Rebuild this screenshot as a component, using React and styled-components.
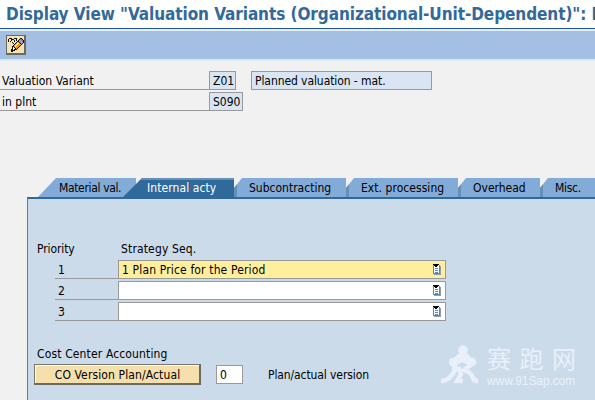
// App.jsx
import React from 'react';
import styled, { createGlobalStyle } from 'styled-components';

const GlobalStyle = createGlobalStyle`
  * {
    box-sizing: border-box;
  }

  body {
    margin: 0;
    background-color: #f1f1f1;
    overflow: hidden;
  }
`;

const Screen = styled.div`
  position: relative;
  display: flex;
  flex-direction: column;
  height: 400px;
  overflow: hidden;
  font-family: 'DejaVu Sans Condensed', 'DejaVu Sans', sans-serif;
  font-stretch: condensed;
  font-size: 12px;
  color: #000;
  white-space: nowrap;
`;

const Text = styled.span`
  line-height: 18px;
  letter-spacing: ${(props) => props.$spacing || 0}px;
`;

const TitleBar = styled.h1`
  flex: none;
  height: 29px;
  margin: 0;
  padding-left: 6px;
  background-color: #fff;
  border-bottom: 1px solid #22578c;
  color: #32699b;
  font-size: 17px;
  font-weight: bold;
  line-height: 28px;
  letter-spacing: -0.07px;
`;

const Toolbar = styled.div`
  flex: none;
  display: flex;
  height: 32px;
  padding: 4px 6px;
  background-color: #a3c0e4;
  border-top: 2px solid #e4edf7;
  border-bottom: 2px solid #dce7ee;
`;

const IconButton = styled.button`
  width: 20px;
  height: 20px;
  padding: 0;
  border: 1px solid #6b6a62;
  border-width: 1px 2px 2px 1px;
  background-color: #f5e3b3;

  svg {
    display: block;
  }
`;

const Header = styled.div`
  flex: none;
  display: flex;
  flex-direction: column;
  gap: 2px;
  height: 117px;
  padding-top: 10px;
`;

const Row = styled.div`
  display: flex;
  height: 19px;
`;

const Label = styled.div`
  display: flex;
  width: ${(props) => props.$width}px;
  padding-top: 1px;
  padding-left: ${(props) => props.$indent || 2}px;
  border-bottom: 1px solid #999;
`;

const Field = styled.div`
  display: flex;
  justify-content: space-between;
  align-items: center;
  width: ${(props) => props.$width}px;
  height: 19px;
  margin-left: ${(props) => props.$gap || 0}px;
  padding: 0 3px;
  border: 1px solid #999;
  background-color: ${(props) => props.$color || '#fff'};
`;

const TabStrip = styled.div`
  flex: none;
  display: flex;
  height: 19px;
  padding-left: 38px;
`;

const Tab = styled.div`
  flex: none;
  display: flex;
  width: ${(props) => props.$width}px;
  padding-top: 1px;
  padding-left: ${(props) => props.$indent}px;
  background-color: #83abd8;
  background-image: linear-gradient(90deg, #6490b8 3px, transparent 3px);
  clip-path: polygon(8px 0, 100% 0, 100% 100%, 0 100%, 0 10px);
`;

const FirstTab = styled(Tab)`
  background-image: none;
  clip-path: polygon(18px 0, 100% 0, 100% 100%, 0 100%);
`;

const ActiveTab = styled(Tab)`
  margin-left: -13px;
  background-color: #306a9b;
  background-image: linear-gradient(#6490b8 2px, transparent 2px);
  color: #fff;
  clip-path: polygon(19px 0, 100% 0, 100% 100%, 0 100%);
`;

const Panel = styled.div`
  flex: 1;
  margin-left: 27px;
  padding: 41px 0 0 6px;
  border-left: 1px solid #5580a8;
  border-top: 2px solid #306a9b;
  background-color: #ccdbea;
`;

const ColumnHeads = styled.div`
  display: grid;
  grid-template-columns: 84px 1fr;
  padding: 0 0 2px 3px;
  height: 20px;
`;

const StrategyList = styled.div`
  display: flex;
  flex-direction: column;
  gap: 2px;
  padding-left: 21px;
`;

const SectionTitle = styled.div`
  height: 19px;
  margin-top: 24px;
  padding-left: 3px;
`;

const Actions = styled.div`
  display: flex;
  align-items: center;
  height: 21px;
`;

const VersionButton = styled.button`
  display: flex;
  justify-content: center;
  align-items: center;
  width: 167px;
  height: 21px;
  padding: 1px 0 0 1px;
  border: 1px solid;
  border-width: 1px 2px 2px 1px;
  border-color: #77766f #6b6a62 #6b6a62 #77766f;
  box-shadow: inset 1px 1px 0 #fffbe8;
  background-color: #f5dfac;
  color: #000;
  font: inherit;
`;

const Caption = styled.div`
  margin-left: 25px;
`;

// Brand mark floats over the bottom right corner of the panel
const Watermark = styled.div`
  position: absolute;
  left: 440px;
  top: 344px;
  display: flex;
  gap: 8px;
  color: #e9f0fa;
`;

const Brand = styled.div`
  display: flex;
  flex-direction: column;
`;

const BrandName = styled.div`
  height: 30px;
  font-family: 'Noto Sans CJK SC', sans-serif;
  font-size: 24px;
  line-height: 28px;
  letter-spacing: 8.5px;
`;

const BrandUrl = styled.div`
  font-family: 'Liberation Sans', sans-serif;
  font-size: 12px;
  line-height: 14px;
  letter-spacing: -0.1px;
`;

const ChangeIcon = () => (
  <svg width="17" height="17" viewBox="0 0 17 17" shapeRendering="crispEdges">
    <path d="M1 3h1v3h-1zM2 2h3v1h-3zM4 3h1v2h-1zM5 3h2v1h-2zM3 5h1v1h-1zM7 2h3v1h-3zM7 4h1v2h-1zM9 3h1v2h-1zM5 6h1v1h-1zM6 7h1v1h-1zM7 8h1v1h-1z" fill="#111" />
    <path d="M13 2h2v1h1v1h1v3h-1v1h-1v1h-1v1h-1v1h-1v1h-1v1h-1v1h-2v1h-2v1h-2v-3h1v-3h1v-1h1v-1h1v-1h1v-1h1v-1h1v-1h1v-1h1z" fill="#111" />
    <path d="M10 6h2v1h1v1h1v1h-1v1h-1v1h-1v1h-1v1h-1v-1h-1v-1h-1v-2h1v-1h1v-1h1z" fill="#f29a1f" />
    <path d="M10 6h1v1h1v1h-1v1h-1v1h-1v1h-1v-2h1v-1h1z" fill="#ffe08a" />
    <path d="M12 4h2v1h1v1h1v1h-1v1h-1v-1h-1v-1h-1z" fill="#8da5e8" />
    <path d="M13 3h2v1h1v2h-1v-1h-1v-1h-1z" fill="#d9645d" />
    <path d="M6 11h1v1h1v1h-1v1h-1z" fill="#fff" />
  </svg>
);

const ListIcon = () => (
  <svg width="10" height="11" viewBox="0 0 10 11" shapeRendering="crispEdges">
    <path d="M2 2h7v9h-7z" fill="#8f9dab" />
    <path d="M1 1h7v9h-7z" fill="#5487bb" />
    <path d="M2 1h5v8h-5z" fill="#fff" />
    <path d="M3 4h3v1h-3zM3 6h3v1h-3zM3 8h3v1h-3z" fill="#5487bb" />
    <path d="M1 0h6v1h-1v1h-1v1h-2v-1h-1v-1h-1z" fill="#000" />
  </svg>
);

const RunnersLogo = () => (
  <svg width="39" height="41" viewBox="0 0 39 41">
    <g fill="currentColor">
      <circle cx="23" cy="6.300" r="4.800" />
      <circle cx="13.500" cy="18" r="4.600" />
      <circle cx="32" cy="18" r="4.400" />
      <path d="M18 10H28L34 17L30 22L22 18L14 23L10 18Z" />
    </g>
    <g fill="none" stroke="currentColor" strokeWidth="4.500">
      <path d="M15 21Q16 28 9 34Q6 37 1 37" />
      <path d="M12 25H19L21 30L17 37H23" />
      <path d="M31 21L24 26Q32 29 33 34Q34 37 38 37" />
    </g>
  </svg>
);

const strategies = [
  { priority: 1, text: '1 Plan Price for the Period' },
  { priority: 2, text: '' },
  { priority: 3, text: '' },
];

const App = () => {
  return (
    <>
      <GlobalStyle />
      <Screen>
        <TitleBar>Display View "Valuation Variants (Organizational-Unit-Dependent)": I</TitleBar>
        <Toolbar>
          <IconButton aria-label="Display or change">
            <ChangeIcon />
          </IconButton>
        </Toolbar>
        <Header>
          <Row>
            <Label $width={209}><Text>Valuation Variant</Text></Label>
            <Field $width={27} $color="#d9e5f3"><Text>Z01</Text></Field>
            <Field $width={181} $gap={15} $color="#d9e5f3"><Text $spacing={-0.08}>Planned valuation - mat.</Text></Field>
          </Row>
          <Row>
            <Label $width={209}><Text>in plnt</Text></Label>
            <Field $width={34} $color="#d9e5f3"><Text>S090</Text></Field>
          </Row>
        </Header>
        <TabStrip>
          <FirstTab $width={98} $indent={21}><Text $spacing={-0.35}>Material val.</Text></FirstTab>
          <ActiveTab $width={111} $indent={24}><Text $spacing={0.08}>Internal acty</Text></ActiveTab>
          <Tab $width={112} $indent={15}><Text>Subcontracting</Text></Tab>
          <Tab $width={112} $indent={15}><Text $spacing={0.05}>Ext. processing</Text></Tab>
          <Tab $width={82} $indent={15}><Text>Overhead</Text></Tab>
          <Tab $width={70} $indent={15}><Text $spacing={-0.3}>Misc.</Text></Tab>
        </TabStrip>
        <Panel>
          <ColumnHeads>
            <Text $spacing={-0.1}>Priority</Text>
            <Text $spacing={0.15}>Strategy Seq.</Text>
          </ColumnHeads>
          <StrategyList>
            {strategies.map((item) => (
              <Row key={item.priority}>
                <Label $width={63} $indent={3}><Text>{item.priority}</Text></Label>
                <Field $width={328} $color={item.text ? '#ffef9c' : '#fff'}>
                  <Text $spacing={0.15}>{item.text}</Text>
                  <ListIcon />
                </Field>
              </Row>
            ))}
          </StrategyList>
          <SectionTitle><Text $spacing={0.14}>Cost Center Accounting</Text></SectionTitle>
          <Actions>
            <VersionButton><Text $spacing={0.12}>CO Version Plan/Actual</Text></VersionButton>
            <Field $width={27} $gap={15}><Text>0</Text></Field>
            <Caption><Text $spacing={-0.1}>Plan/actual version</Text></Caption>
          </Actions>
        </Panel>
        <Watermark>
          <RunnersLogo />
          <Brand>
            <BrandName>赛跑网</BrandName>
            <BrandUrl>www.91Sap.com</BrandUrl>
          </Brand>
        </Watermark>
      </Screen>
    </>
  );
};

export default App;
